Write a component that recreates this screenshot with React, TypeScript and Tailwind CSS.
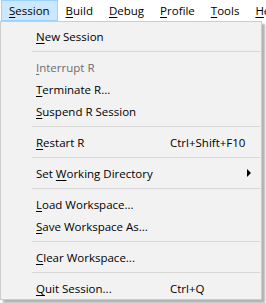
type Item =
  | { kind: 'sep' }
  | { kind: 'item'; pre?: string; key: string; rest: string; shortcut?: string; disabled?: boolean; submenu?: boolean }

const bar = [
  { key: 'S', rest: 'ession', active: true },
  { key: 'B', rest: 'uild' },
  { key: 'D', rest: 'ebug' },
  { key: 'P', rest: 'rofile' },
  { key: 'T', rest: 'ools' },
  { key: 'H', rest: 'elp' },
]

const items: Item[] = [
  { kind: 'item', key: 'N', rest: 'ew Session' },
  { kind: 'sep' },
  { kind: 'item', key: 'I', rest: 'nterrupt R', disabled: true },
  { kind: 'item', key: 'T', rest: 'erminate R...' },
  { kind: 'item', key: 'S', rest: 'uspend R Session' },
  { kind: 'sep' },
  { kind: 'item', key: 'R', rest: 'estart R', shortcut: 'Ctrl+Shift+F10' },
  { kind: 'sep' },
  { kind: 'item', pre: 'Set ', key: 'W', rest: 'orking Directory', submenu: true },
  { kind: 'sep' },
  { kind: 'item', key: 'L', rest: 'oad Workspace...' },
  { kind: 'item', key: 'S', rest: 'ave Workspace As...' },
  { kind: 'sep' },
  { kind: 'item', key: 'C', rest: 'lear Workspace...' },
  { kind: 'sep' },
  { kind: 'item', key: 'Q', rest: 'uit Session...', shortcut: 'Ctrl+Q' },
]

export default function App() {
  return (
    <div
      className="h-[303px] w-[266px] overflow-hidden bg-white text-[11.5px] text-black"
      style={{ fontFamily: '"Segoe UI", "Open Sans", sans-serif' }}
    >
      {/* menu bar */}
      <div className="flex h-[21px] items-stretch whitespace-nowrap pl-px">
        {bar.map((b) => (
          <div
            key={b.key}
            className={
              b.active
                ? 'flex items-center border border-[#99d1ff] bg-[#cce8ff] px-[7px] pt-px'
                : 'flex items-center border border-transparent px-[7px] pt-px'
            }
          >
            <span className="underline underline-offset-2">{b.key}</span>
            {b.rest}
          </div>
        ))}
      </div>

      {/* dropdown */}
      <div className="w-[262px] border border-[#cccccc] bg-[#f2f2f2] pt-[3px] shadow-[3px_3px_2px_rgba(0,0,0,0.3)]">
        {items.map((it, i) =>
          it.kind === 'sep' ? (
            <div key={i} className="flex h-[9px] items-center pl-[31px] pr-px">
              <div className="h-px w-full bg-[#d7d7d7]" />
            </div>
          ) : (
            <div
              key={i}
              className={
                'relative flex h-[22px] items-center whitespace-nowrap pt-px pl-[35px] ' +
                (it.disabled ? 'text-[#6d6d6d]' : '')
              }
            >
              <span className="w-[134px]">
                {it.pre}
                <span className="underline underline-offset-2">{it.key}</span>
                {it.rest}
              </span>
              {it.shortcut && <span>{it.shortcut}</span>}
              {it.submenu && (
                <svg className="absolute left-[246px] top-[7px]" width="4" height="8" viewBox="0 0 4 8">
                  <path d="M0 0 L4 4 L0 8 Z" fill="#000" />
                </svg>
              )}
            </div>
          ),
        )}
      </div>
    </div>
  )
}
